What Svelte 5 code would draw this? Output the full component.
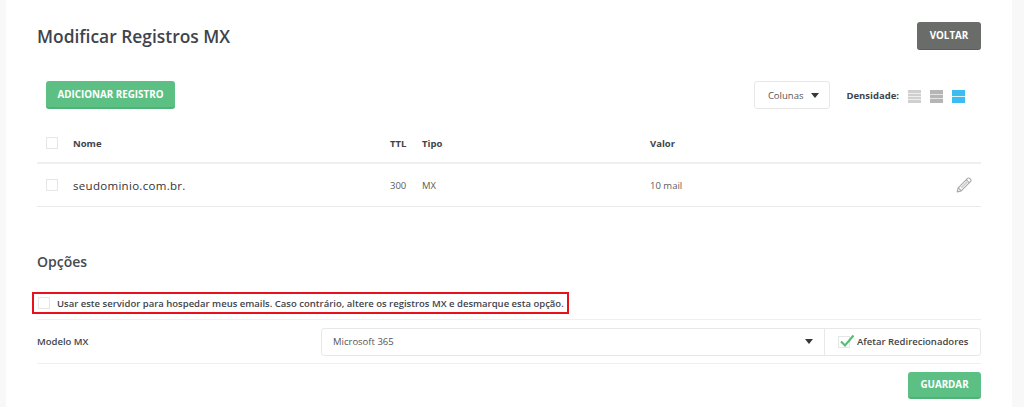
<script>
  const densities = [0, 1, 2];
</script>

<div class="page">
  <main class="panel">
    <header class="head">
      <h1>Modificar Registros MX</h1>
      <button class="btn dark">VOLTAR</button>
    </header>

    <div class="toolbar">
      <button class="btn green add">ADICIONAR REGISTRO</button>
      <div class="tools">
        <button class="cols">Colunas <span class="caret"></span></button>
        <span class="dens-label">Densidade:</span>
        <div class="dens">
          {#each densities as i}
            <svg width="13" height="13" viewBox="0 0 13 13">
              {#if i === 0}
                <rect width="13" height="13" fill="#cfcfcf" />
                <path d="M0 3.5H13M0 6.5H13M0 9.5H13" stroke="#eee" stroke-width="1" />
              {:else if i === 1}
                <rect width="13" height="13" fill="#b5b5b5" />
                <path d="M0 4.5H13M0 8.5H13" stroke="#e4e4e4" stroke-width="1" />
              {:else}
                <rect width="13" height="13" fill="#3dbcf2" />
                <path d="M0 6.5H13" stroke="#d8f2fd" stroke-width="1" />
              {/if}
            </svg>
          {/each}
        </div>
      </div>
    </div>

    <div class="table">
      <div class="row th">
        <span class="check"></span>
        <span class="c-name">Nome</span>
        <span class="c-ttl">TTL</span>
        <span class="c-type">Tipo</span>
        <span class="c-val">Valor</span>
      </div>
      <div class="row td">
        <span class="check"></span>
        <span class="c-name domain">seudominio.com.br.</span>
        <span class="c-ttl">300</span>
        <span class="c-type">MX</span>
        <span class="c-val">10 mail</span>
        <svg class="pencil" width="16" height="16" viewBox="0 0 16 16">
          <path d="M1.2 14.8 2.2 10.8 11.6 1.4a1.4 1.4 0 0 1 2 0l1 1a1.4 1.4 0 0 1 0 2L5.2 13.8Z" fill="#fff" stroke="#a9a9a9" stroke-width="1.2" stroke-linejoin="round" />
          <path d="M2.4 10.8 5.2 13.6M10.4 2.8 13.2 5.6" stroke="#a9a9a9" stroke-width="1.1" fill="none" />
          <path d="M4.6 10.2 11 3.8 12.2 5 5.8 11.4Z" fill="#d0d0d0" />
        </svg>
      </div>
    </div>

    <h2>Opções</h2>

    <div class="notice">
      <span class="check"></span>
      <span>Usar este servidor para hospedar meus emails. Caso contrário, altere os registros MX e desmarque esta opção.</span>
    </div>

    <div class="model">
      <span class="model-label">Modelo MX</span>
      <div class="group">
        <div class="select">
          <span>Microsoft 365</span>
          <span class="caret"></span>
        </div>
        <div class="addon">
          <span class="check checked">
            <svg width="16" height="14" viewBox="0 0 16 14">
              <path d="M2 7.5 6 11.5 14.5 1.5" fill="none" stroke="#56bd7b" stroke-width="2.2" />
            </svg>
          </span>
          <span>Afetar Redirecionadores</span>
        </div>
      </div>
    </div>

    <div class="foot">
      <button class="btn green save">GUARDAR</button>
    </div>
  </main>
</div>

<style>
  :global(body) {
    margin: 0;
    background: #f8f8f8;
  }
  .page {
    height: 407px;
    overflow: hidden;
    padding: 0 12px 0 6px;
    font-family: "Open Sans", "Liberation Sans", sans-serif;
    color: #444;
  }
  .panel {
    background: #fff;
    height: 407px;
    padding: 22px 31px 0;
    box-sizing: border-box;
  }
  .head {
    display: flex;
    justify-content: space-between;
    align-items: flex-start;
    height: 59px;
  }
  h1 {
    margin: 0;
    font-size: 17.4px;
    line-height: 28px;
    font-weight: 600;
    color: #3f444c;
  }
  .btn {
    border: 0;
    border-radius: 3px;
    color: #fff;
    font-family: inherit;
    font-size: 9.8px;
    font-weight: 700;
    height: 27.5px;
    padding: 0;
  }
  .dark {
    width: 64px;
    background: #6a6c6a;
    border-bottom: 1px solid #5b5d5b;
  }
  .green {
    background: #5cc085;
    border-bottom: 2px solid #4fb276;
  }
  .add {
    width: 129px;
  }
  .save {
    width: 73px;
    height: 27px;
  }
  .toolbar {
    display: flex;
    justify-content: space-between;
    align-items: center;
    height: 28px;
    padding: 0 0 0 9px;
    margin-bottom: 15px;
  }
  .tools {
    display: flex;
    align-items: center;
    padding-right: 16px;
  }
  .cols {
    width: 76px;
    height: 28px;
    background: #fff;
    border: 1px solid #e8e8e8;
    border-radius: 3px;
    font-family: inherit;
    font-size: 9.5px;
    color: #555;
    padding: 0 0 0 2px;
    margin-right: 16px;
  }
  .cols .caret {
    margin-left: 5px;
  }
  .caret {
    display: inline-block;
    vertical-align: middle;
    width: 0;
    height: 0;
    border-left: 4.5px solid transparent;
    border-right: 4.5px solid transparent;
    border-top: 5px solid #33383d;
  }
  .dens-label {
    font-size: 9.5px;
    font-weight: 700;
    color: #3f444c;
    margin-right: 9px;
  }
  .dens {
    display: flex;
    gap: 9px;
    margin-top: 3px;
  }
  .dens svg {
    display: block;
  }
  .table {
    font-size: 9.5px;
  }
  .row {
    display: flex;
    align-items: center;
    position: relative;
    padding-left: 9px;
  }
  .th {
    height: 40px;
    border-bottom: 2px solid #efefef;
    font-weight: 700;
    color: #3f444c;
    box-sizing: border-box;
  }
  .td {
    height: 43px;
    border-bottom: 1px solid #e9e9e9;
    box-sizing: border-box;
    color: #5c5c5c;
  }
  .check {
    display: inline-block;
    flex: none;
    width: 10px;
    height: 10px;
    border: 1px solid #e6e6e6;
    background: #fff;
    box-shadow: inset 0 0 1px #eee;
  }
  .c-name {
    width: 317px;
    margin-left: 15px;
  }
  .domain {
    font-size: 11.5px;
    color: #333;
    letter-spacing: 0.3px;
  }
  .c-ttl {
    width: 32px;
  }
  .c-type {
    width: 228px;
  }
  .pencil {
    position: absolute;
    right: 9px;
    top: 13px;
  }
  h2 {
    margin: 43px 0 0;
    font-size: 14px;
    line-height: 24px;
    font-weight: 600;
    color: #454a50;
  }
  .notice {
    margin: 18px 0 0 -5px;
    width: 537px;
    height: 22px;
    box-sizing: border-box;
    border: 2px solid #e8111b;
    display: flex;
    align-items: center;
    padding-left: 4px;
    gap: 7px;
    font-size: 9.5px;
    font-weight: 600;
    color: #3f444c;
    white-space: nowrap;
  }
  .model {
    display: flex;
    align-items: center;
    height: 45px;
    margin-top: 5px;
    box-sizing: border-box;
    border-top: 1px solid #efefef;
    border-bottom: 1px solid #efefef;
  }
  .model-label {
    width: 284px;
    font-size: 9.5px;
    font-weight: 600;
    color: #3f444c;
  }
  .group {
    flex: 1;
    display: flex;
    height: 28px;
    border: 1px solid #e8e8e8;
    border-radius: 3px;
    box-sizing: border-box;
    font-size: 9.5px;
  }
  .select {
    flex: 1;
    display: flex;
    justify-content: space-between;
    align-items: center;
    padding: 0 11px;
    color: #555;
  }
  .addon {
    width: 156px;
    display: flex;
    align-items: center;
    gap: 7px;
    padding-left: 13px;
    box-sizing: border-box;
    border-left: 1px solid #e8e8e8;
    font-weight: 600;
    color: #444;
  }
  .checked {
    position: relative;
  }
  .checked svg {
    position: absolute;
    left: 0;
    top: -3px;
  }
  .foot {
    display: flex;
    justify-content: flex-end;
    margin-top: 8px;
  }
</style>
